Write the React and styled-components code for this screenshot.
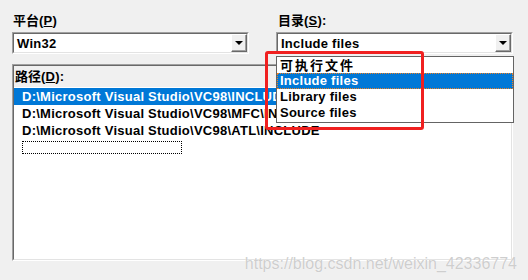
import styled, { createGlobalStyle } from "styled-components";

const Global = createGlobalStyle`
  html, body {
    margin: 0;
    padding: 0;
    background: #f0f0f0;
  }
  body {
    font-family: "Liberation Sans", "Noto Sans CJK SC", sans-serif;
    font-size: 13px;
    font-weight: bold;
    letter-spacing: 0.25px;
    color: #000;
  }
`;

const Page = styled.div`
  position: relative;
  width: 528px;
  height: 280px;
  box-sizing: border-box;
  padding: 12px 0 0 12px;
  overflow: hidden;
`;

const TopRow = styled.div`
  display: flex;
  gap: 27px;
`;

const Field = styled.div`
  display: flex;
  flex-direction: column;
  width: ${(p) => p.w}px;
`;

const Label = styled.div`
  height: 16px;
  line-height: 16px;
  margin: 0 0 4px ${(p) => p.indent || 1}px;
  white-space: nowrap;
`;

const Cjk = styled.span`
  font-family: "Noto Sans CJK SC", sans-serif;
  letter-spacing: ${(p) => p.spacing || 0}px;
`;

const Combo = styled.div`
  height: 22px;
  box-sizing: border-box;
  border-top: 1px solid #a0a0a0;
  border-left: 1px solid #a0a0a0;
  border-right: 1px solid #fff;
  border-bottom: 1px solid #fff;
  background: #fff;
  display: flex;
`;

const ComboInner = styled.div`
  flex: 1;
  display: flex;
  align-items: center;
  border-top: 1px solid #696969;
  border-left: 1px solid #696969;
  border-right: 1px solid #e3e3e3;
  border-bottom: 1px solid #e3e3e3;
  padding: 0 0 0 3px;
`;

const ComboText = styled.span`
  flex: 1;
  white-space: nowrap;
`;

const DropButton = styled.div`
  width: 16px;
  height: 18px;
  box-sizing: border-box;
  background: #f0f0f0;
  border-top: 1px solid #fff;
  border-left: 1px solid #fff;
  border-right: 1px solid #696969;
  border-bottom: 1px solid #696969;
  box-shadow: inset -1px -1px 0 #a0a0a0;
  display: flex;
  align-items: center;
  justify-content: center;
`;

const Arrow = styled.div`
  width: 0;
  height: 0;
  border-left: 4px solid transparent;
  border-right: 4px solid transparent;
  border-top: 4px solid #000;
  margin-left: -1px;
`;

const ListBox = styled.div`
  margin-top: 10px;
  width: 501px;
  height: 197px;
  box-sizing: border-box;
  border-top: 1px solid #a0a0a0;
  border-left: 1px solid #a0a0a0;
  border-right: 1px solid #fff;
  border-bottom: 1px solid #fff;
  display: flex;
  flex-direction: column;
`;

const ListInner = styled.div`
  flex: 1;
  display: flex;
  flex-direction: column;
  border-top: 1px solid #696969;
  border-left: 1px solid #696969;
  border-right: 1px solid #e3e3e3;
  border-bottom: 1px solid #e3e3e3;
`;

const ListHeader = styled.div`
  height: 21px;
  line-height: 20px;
  padding-left: 1px;
  background: #f0f0f0;
  white-space: nowrap;
`;

const ListBody = styled.div`
  flex: 1;
  background: #fff;
  padding-top: 1px;
`;

const PathRow = styled.div`
  height: 17px;
  line-height: 17px;
  padding-left: 8px;
  white-space: nowrap;
  background: ${(p) => (p.selected ? "#0078d7" : "transparent")};
  color: ${(p) => (p.selected ? "#fff" : "#000")};
`;

const EditSlot = styled.div`
  width: 160px;
  height: 13px;
  box-sizing: border-box;
  margin: 2px 0 0 8px;
  border: 1px dotted #000;
`;

const DropList = styled.div`
  position: absolute;
  left: 276px;
  top: 56px;
  width: 238px;
  height: 67px;
  box-sizing: border-box;
  background: #fff;
  border: 1px solid #646464;
`;

const DropItem = styled.div`
  height: 16px;
  line-height: 16px;
  padding-left: 3px;
  box-sizing: border-box;
  white-space: nowrap;
  background: ${(p) => (p.selected ? "#0078d7" : "transparent")};
  color: ${(p) => (p.selected ? "#fff" : "#000")};
  outline: ${(p) => (p.selected ? "1px dotted #f08020" : "none")};
  outline-offset: -1px;
`;

const RedMark = styled.div`
  position: absolute;
  left: 265px;
  top: 51px;
  width: 159px;
  height: 79px;
  box-sizing: border-box;
  border: 3px solid #f02020;
  border-radius: 3px;
`;

const Watermark = styled.div`
  position: absolute;
  right: 11px;
  bottom: 7px;
  font-family: "Liberation Sans", sans-serif;
  font-weight: normal;
  font-size: 16px;
  letter-spacing: 0;
  color: rgba(185, 185, 185, 0.7);
  text-shadow: 0 0 1px #fff;
  white-space: nowrap;
`;

const paths = [
  "D:\\Microsoft Visual Studio\\VC98\\INCLUDE",
  "D:\\Microsoft Visual Studio\\VC98\\MFC\\INCLUDE",
  "D:\\Microsoft Visual Studio\\VC98\\ATL\\INCLUDE",
];

const dirs = ["Include files", "Library files", "Source files"];

export default function App() {
  return (
    <Page>
      <Global />
      <TopRow>
        <Field w={237}>
          <Label>
            <Cjk>平台</Cjk>(<u>P</u>)
          </Label>
          <Combo>
            <ComboInner>
              <ComboText>Win32</ComboText>
              <DropButton>
                <Arrow />
              </DropButton>
            </ComboInner>
          </Combo>
        </Field>
        <Field w={237}>
          <Label indent={2}>
            <Cjk>目录</Cjk>(<u>S</u>):
          </Label>
          <Combo>
            <ComboInner>
              <ComboText>Include files</ComboText>
              <DropButton>
                <Arrow />
              </DropButton>
            </ComboInner>
          </Combo>
        </Field>
      </TopRow>

      <ListBox>
        <ListInner>
          <ListHeader>
            <Cjk>路径</Cjk>(<u>D</u>):
          </ListHeader>
          <ListBody>
            {paths.map((p, i) => (
              <PathRow key={p} selected={i === 0}>
                {p}
              </PathRow>
            ))}
            <EditSlot />
          </ListBody>
        </ListInner>
      </ListBox>

      <DropList>
        <DropItem>
          <Cjk spacing={2}>可执行文件</Cjk>
        </DropItem>
        {dirs.map((d, i) => (
          <DropItem key={d} selected={i === 0}>
            {d}
          </DropItem>
        ))}
      </DropList>

      <RedMark />
      <Watermark>https://blog.csdn.net/weixin_42336774</Watermark>
    </Page>
  );
}
